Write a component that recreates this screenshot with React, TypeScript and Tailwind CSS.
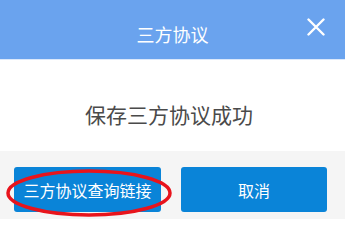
import React from 'react';

const App = () => {
  return (
    <div
      className="relative w-[345px] h-[223px] bg-white overflow-hidden"
      style={{ fontFamily: '"Microsoft YaHei", "Noto Sans CJK SC", sans-serif' }}
    >
      {/* Header */}
      <div className="relative h-[60px] bg-[#6aa3ee] border-b border-[#dbe8fb] flex items-center justify-center">
        <span className="text-white text-[18px] mt-[9px]">三方协议</span>
        <button className="absolute right-[20px] top-[18px] w-[18px] h-[18px] flex items-center justify-center">
          <svg width="18" height="18" viewBox="0 0 18 18">
            <path d="M1.5 1.5 L16.5 16.5 M16.5 1.5 L1.5 16.5" stroke="#fff" strokeWidth="2.4" strokeLinecap="round" />
          </svg>
        </button>
      </div>

      {/* Body */}
      <div className="h-[91px] flex items-center justify-center">
        <p className="text-[21px] text-[#4a4a4a] mt-[18px] mr-[7px]">保存三方协议成功</p>
      </div>

      {/* Footer */}
      <div className="h-[68px] bg-[#f5f5f5] flex items-start gap-[20px] pl-[14px] pr-[16px] pt-[16px]">
        <button className="w-[147px] h-[45px] rounded-[3px] bg-[#0a84d8] text-white text-[16px] flex items-center justify-center">
          三方协议查询链接
        </button>
        <button className="w-[146px] h-[45px] rounded-[3px] bg-[#0a84d8] text-white text-[16px] flex items-center justify-center">
          取消
        </button>
      </div>

      {/* Red annotation ellipse */}
      <svg className="absolute left-0 top-0 pointer-events-none" width="345" height="223">
        <ellipse cx="89" cy="193" rx="81" ry="22" fill="none" stroke="#e8141c" strokeWidth="3.5" />
      </svg>
    </div>
  );
};

export default App;
